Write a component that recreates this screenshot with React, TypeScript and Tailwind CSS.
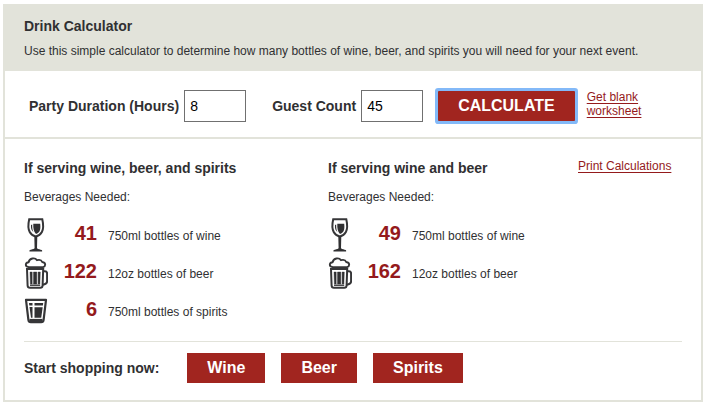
import React from "react";

function WineIcon() {
  return (
    <svg viewBox="0 0 24 34" className="h-[34px] w-6" fill="none" aria-hidden="true">
      <path d="M5.200 1.200h13.100c1.100 5 1.500 9.300-.4 12.800-1.300 2.400-3.200 3.800-6.100 4.500-2.900-.7-4.800-2.100-6.100-4.500C3.800 10.500 4.100 6.200 5.200 1.200Z" stroke="#363638" strokeWidth="2" />
      <path d="M7 7l1.200-.6c-.1 3.600.3 5.800 1.300 7.600C7.500 12.800 6.700 10 7 7Z" fill="#303032" />
      <path d="M9.300 5.800h6.900c.4 3.500.2 6-.8 7.700-.8 1.300-1.900 2-3.400 2.400-2.300-2.200-2.900-5.600-2.700-10.100Z" fill="#303032" />
      <path d="M10.300 18h3l-.3 12.200c1.200 1 3.500 1.300 4.700 1.700.7.300.7 1.700-.1 1.700H6c-.8 0-.8-1.400-.1-1.700 1.200-.4 3.500-.7 4.700-1.700Z" fill="#303032" />
    </svg>
  );
}

function BeerIcon() {
  return (
    <svg viewBox="0 0 24 32" className="h-8 w-6" fill="none" stroke="#363638" aria-hidden="true">
      <path d="M3 12l.6 16.500c.1 1.600.9 2.300 2.300 2.300h10.400c1.400 0 2.200-.7 2.300-2.300L19.200 12Z" strokeWidth="2" />
      <path d="M19.400 14.300h1.500c1.500 0 2.200.8 2.200 2.300v7.600c0 2-1.600 3-4.300 3.500" strokeWidth="2" />
      <path d="M4.500 10C.8 9.600 1.100 5.500 4.600 5.200 5.500 1 11 .2 13 3.200c2.500-.7 4.600.2 5.200 1.800 3.800.5 3.700 4.300.9 5.200Z" fill="#fff" strokeWidth="1.900" strokeLinejoin="round" />
      <path d="M6 15h2.200v12H6.400ZM9.500 15h3.300v12H9.500ZM14.100 15h2.200l-.4 12h-1.800Z" fill="#303032" stroke="#303032" strokeWidth=".4" />
      <path d="M6 28.200h10.200" strokeWidth="1.400" />
    </svg>
  );
}

function SpiritsIcon() {
  return (
    <svg viewBox="0 0 24 26" className="h-[26px] w-6" fill="none" aria-hidden="true">
      <path d="M2 1.900h20l-2.400 20c-.2 1.600-1 2.300-2.400 2.300H6.800c-1.400 0-2.200-.7-2.400-2.300Z" stroke="#363638" strokeWidth="2.200" strokeLinejoin="round" />
      <path d="M5 5h3.500v2.500H5.300ZM5.500 9h3v10.700H7ZM10.500 9.300h8.200l-1.500 10.400h-6.700ZM10.500 5h8.700l-.3 2.600h-8.400Z" fill="#303032" />
      <path d="M5.500 22.200h13" stroke="#363638" strokeWidth="2.600" />
    </svg>
  );
}

const icons = { wine: WineIcon, beer: BeerIcon, spirits: SpiritsIcon };

interface Drink {
  kind: keyof typeof icons;
  count: number;
  label: string;
}

function Serving({ title, drinks }: { title: string; drinks: Drink[] }) {
  return (
    <section>
      <h2 className="text-sm leading-5 font-bold">{title}</h2>
      <p className="mt-[9px] leading-5">Beverages Needed:</p>
      <ul className="mt-[7px]">
        {drinks.map(({ kind, count, label }) => {
          const Icon = icons[kind];
          return (
            <li key={kind} className="flex h-[38px] items-center">
              <span className="flex h-[34px] items-center self-end">
                <Icon />
              </span>
              <p className="flex items-baseline gap-[11px]">
                <strong className="w-[49px] text-right text-xl leading-6 text-[#941a1c]">{count}</strong>
                <span>{label}</span>
              </p>
            </li>
          );
        })}
      </ul>
    </section>
  );
}

function Field({ id, label, value }: { id: string; label: string; value: string }) {
  return (
    <div className="flex items-center gap-[5px]">
      <label htmlFor={id} className="text-sm font-bold whitespace-nowrap">{label}</label>
      <input
        id={id}
        defaultValue={value}
        inputMode="numeric"
        className="h-8 w-[62px] border border-[#707070] bg-white px-[5px] text-sm text-black"
      />
    </div>
  );
}

const redButton = "h-[30px] bg-[#a1251f] px-5 text-base leading-5 font-bold text-white";
const link = "text-[#941a1c] underline underline-offset-2";

export default function App() {
  return (
    <main className="px-[3px] pt-1 font-['Liberation_Sans',Arial,sans-serif] text-xs text-[#303032]">
      <div className="border-2 border-t-0 border-[#e2e3da] bg-white">
        <header className="bg-[#e2e3da] px-[19px] pt-3 pb-[10px]">
          <h1 className="text-sm leading-5 font-bold">Drink Calculator</h1>
          <p className="mt-[5px] leading-5">
            Use this simple calculator to determine how many bottles of wine, beer, and spirits you will need for your next event.
          </p>
        </header>
        <form
          className="flex items-center border-b-2 border-[#e2e3da] px-6 pt-[19px] pb-[15px]"
          onSubmit={(event) => event.preventDefault()}
        >
          <div className="flex gap-[26px]">
            <Field id="duration" label="Party Duration (Hours)" value="8" />
            <Field id="guests" label="Guest Count" value="45" />
          </div>
          <button type="submit" className={`${redButton} ml-[15px] rounded-[1px] ring-3 ring-[#83b9f8]`}>
            CALCULATE
          </button>
          <a href="#worksheet" className={`${link} -mt-1 ml-3 w-16 leading-[14px]`}>Get blank worksheet</a>
        </form>
        <div className="px-[19px] pt-[19px] pb-[17px]">
          <div className="grid grid-cols-[304px_250px_1fr] border-b border-[#e2e3da] pb-[13px]">
            <Serving
              title="If serving wine, beer, and spirits"
              drinks={[
                { kind: "wine", count: 41, label: "750ml bottles of wine" },
                { kind: "beer", count: 122, label: "12oz bottles of beer" },
                { kind: "spirits", count: 6, label: "750ml bottles of spirits" },
              ]}
            />
            <Serving
              title="If serving wine and beer"
              drinks={[
                { kind: "wine", count: 49, label: "750ml bottles of wine" },
                { kind: "beer", count: 162, label: "12oz bottles of beer" },
              ]}
            />
            <div>
              <a href="#print" className={`${link} leading-4 whitespace-nowrap`}>Print Calculations</a>
            </div>
          </div>
          <nav className="mt-[11px] flex items-center" aria-labelledby="shop">
            <h2 id="shop" className="mr-7 text-sm font-bold">Start shopping now:</h2>
            <div className="flex gap-4">
              <button type="button" className={redButton}>Wine</button>
              <button type="button" className={redButton}>Beer</button>
              <button type="button" className={redButton}>Spirits</button>
            </div>
          </nav>
        </div>
      </div>
    </main>
  );
}
